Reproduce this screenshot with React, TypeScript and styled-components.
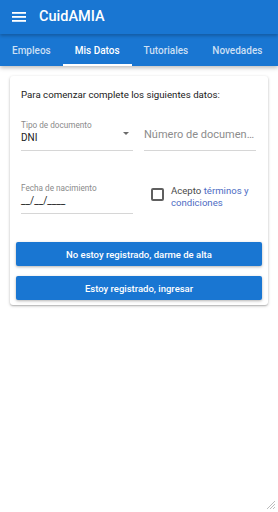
import React from "react";
import styled, { createGlobalStyle } from "styled-components";

const Global = createGlobalStyle`
  html, body { margin: 0; padding: 0; background: #ffffff; }
  body { font-family: Roboto, "Noto Sans", Arial, sans-serif; }
  * { box-sizing: border-box; }
`;

const Page = styled.div`
  width: 278px;
  height: 512px;
  position: relative;
  overflow: hidden;
  background: #ffffff;
`;

const AppBar = styled.header`
  background: #1976d2;
  box-shadow: 0 2px 4px rgba(0, 0, 0, 0.25);
  position: relative;
  z-index: 1;
`;

const Toolbar = styled.div`
  height: 34px;
  display: flex;
  align-items: center;
  padding: 0 12px 1px 12px;
  gap: 13px;
  box-shadow: 0 2px 3px rgba(0, 0, 0, 0.22);
  position: relative;
  z-index: 1;
`;

const Title = styled.div`
  color: #ffffff;
  font-size: 14.5px;
  font-weight: 500;
`;

const Tabs = styled.nav`
  height: 32px;
  display: flex;
`;

const Tab = styled.div<{ $active?: boolean }>`
  position: relative;
  padding: 0 12px;
  display: flex;
  align-items: center;
  white-space: nowrap;
  color: ${(p) => (p.$active ? "#ffffff" : "rgba(255,255,255,0.78)")};
  font-size: 10px;
  font-weight: 500;
  &::after {
    content: "";
    position: absolute;
    left: 0;
    right: 0;
    bottom: 0;
    height: 2px;
    background: ${(p) => (p.$active ? "#ffffff" : "transparent")};
  }
`;

const Card = styled.section`
  margin: 10px 10px 0 10px;
  background: #fff;
  border-radius: 3px;
  box-shadow: 0 1px 3px rgba(0, 0, 0, 0.25), 0 1px 1px rgba(0, 0, 0, 0.12);
  padding: 12px 6px 5px 6px;
`;

const Intro = styled.p`
  margin: 0 0 0 5px;
  font-size: 9.7px;
  line-height: 13px;
  color: #212121;
`;

const Row = styled.div`
  display: grid;
  grid-template-columns: 112px 112px;
  column-gap: 11px;
  padding: 0 5px;
`;

const Field = styled.div<{ $top: number }>`
  margin-top: ${(p) => p.$top}px;
  border-bottom: 1px solid #d6d6d6;
  position: relative;
`;

const Label = styled.div`
  font-size: 8.2px;
  color: #8a8a8a;
  line-height: 11px;
`;

const Value = styled.div`
  font-size: 10px;
  color: #212121;
  line-height: 13px;
  padding-bottom: 6px;
`;

const Placeholder = styled.div`
  font-size: 11px;
  color: #8c8c8c;
  line-height: 14px;
  padding: 8px 0 8px 0;
  white-space: nowrap;
  overflow: hidden;
  text-overflow: ellipsis;
`;

const Caret = styled.div`
  position: absolute;
  right: 4px;
  top: 12px;
  width: 0;
  height: 0;
  border-left: 3.5px solid transparent;
  border-right: 3.5px solid transparent;
  border-top: 3.5px solid #6b6b6b;
`;

const CheckRow = styled.div`
  margin-top: 34px;
  display: flex;
  align-items: flex-start;
  gap: 7px;
  padding-left: 7px;
`;

const Box = styled.div`
  width: 13px;
  height: 13px;
  border: 2px solid #5f5f5f;
  border-radius: 2px;
  margin-top: 3px;
  flex: none;
`;

const CheckText = styled.div`
  font-size: 9.6px;
  line-height: 12px;
  color: #4a4a4a;
`;

const Link = styled.span`
  color: #4e6cc4;
`;

const Buttons = styled.div`
  margin-top: 28px;
  display: flex;
  flex-direction: column;
  gap: 10px;
`;

const Button = styled.button`
  height: 24px;
  border: none;
  border-radius: 2px;
  background: #1976d2;
  color: #ffffff;
  font-family: Roboto, Arial, sans-serif;
  font-size: 9.5px;
  font-weight: 500;
  box-shadow: 0 1px 3px rgba(0, 0, 0, 0.3);
  cursor: pointer;
`;

const Grip = styled.svg`
  position: absolute;
  right: 2px;
  bottom: 2px;
`;

function MenuIcon() {
  return (
    <svg width="14" height="10" viewBox="0 0 14 10">
      <rect x="0" y="0" width="14" height="1.8" fill="#fff" />
      <rect x="0" y="4" width="14" height="1.8" fill="#fff" />
      <rect x="0" y="8" width="14" height="1.8" fill="#fff" />
    </svg>
  );
}

export default function App() {
  return (
    <Page>
      <Global />
      <AppBar>
        <Toolbar>
          <MenuIcon />
          <Title>CuidAMIA</Title>
        </Toolbar>
        <Tabs>
          <Tab>Empleos</Tab>
          <Tab $active>Mis Datos</Tab>
          <Tab>Tutoriales</Tab>
          <Tab>Novedades</Tab>
        </Tabs>
      </AppBar>
      <Card>
        <Intro>Para comenzar complete los siguientes datos:</Intro>
        <Row>
          <Field $top={19}>
            <Label>Tipo de documento</Label>
            <Value>DNI</Value>
            <Caret />
          </Field>
          <Field $top={19}>
            <Placeholder>Número de documento</Placeholder>
          </Field>
          <Field $top={32}>
            <Label>Fecha de nacimiento</Label>
            <Value>__/__/____</Value>
          </Field>
          <CheckRow>
            <Box />
            <CheckText>
              Acepto <Link>términos y condiciones</Link>
            </CheckText>
          </CheckRow>
        </Row>
        <Buttons>
          <Button>No estoy registrado, darme de alta</Button>
          <Button>Estoy registrado, ingresar</Button>
        </Buttons>
      </Card>
      <Grip width="10" height="10" viewBox="0 0 10 10">
        <line x1="9" y1="1" x2="1" y2="9" stroke="#bdbdbd" strokeWidth="1" />
        <line x1="9" y1="4" x2="4" y2="9" stroke="#bdbdbd" strokeWidth="1" />
        <line x1="9" y1="7" x2="7" y2="9" stroke="#bdbdbd" strokeWidth="1" />
      </Grip>
    </Page>
  );
}
